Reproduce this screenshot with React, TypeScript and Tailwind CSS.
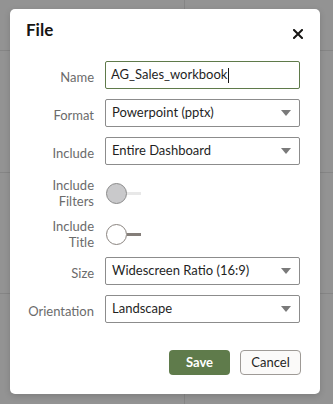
import React from "react";

const font = { fontFamily: "Lato, 'Open Sans', sans-serif" };

function Caret() {
  return (
    <svg width="10" height="6" viewBox="0 0 10 6" className="shrink-0">
      <path d="M0 0 H10 L5 6 Z" fill="#7a7a7a" />
    </svg>
  );
}

function Row({ label, children }: { label: React.ReactNode; children: React.ReactNode }) {
  return (
    <div className="flex items-start gap-[11px]">
      <div className="w-[68px] shrink-0 text-right text-[13px] leading-[28px] text-[#6b6b6b] translate-y-[2px]">{label}</div>
      {children}
    </div>
  );
}

function Select({ value }: { value: string }) {
  return (
    <div className="flex h-[28px] w-[195px] items-center justify-between rounded-[2px] border border-[#8c8c8c] pl-[6px] pr-[8px] text-[13px] text-[#1f1f1f]">
      <span>{value}</span>
      <Caret />
    </div>
  );
}

export default function App() {
  return (
    <div className="relative h-[404px] w-[333px] overflow-hidden bg-[#939393]" style={font}>
      <div className="grid h-full grid-cols-[185px_1fr] grid-rows-[51px_122px_121px_1fr]">
        <div className="border-b border-r border-[#858585]" />
        <div className="border-b border-[#858585]" />
        <div className="border-b border-r border-[#858585]" />
        <div className="border-b border-[#858585]" />
        <div className="border-b border-r border-[#858585]" />
        <div className="border-b border-[#858585]" />
        <div className="border-r border-[#858585]" />
        <div />
      </div>

      <div className="absolute left-[10px] top-[9px] flex h-[385px] w-[310px] flex-col rounded-[5px] bg-white px-[16px] shadow-[0_2px_6px_rgba(0,0,0,0.15)]">
        <div className="flex items-start justify-between pt-[10px]">
          <h1 className="text-[17px] font-bold leading-[22px] text-[#161513]">File</h1>
          <svg width="10" height="10" viewBox="0 0 10 10" className="mr-[1px] mt-[10px]">
            <path d="M1 1 L9 9 M9 1 L1 9" stroke="#161513" strokeWidth="2" strokeLinecap="square" />
          </svg>
        </div>

        <div className="mt-[20px] flex flex-col">
          <Row label="Name">
            <div className="flex h-[28px] w-[195px] items-center rounded-[2px] border border-[#5f7a4a] pl-[5px] text-[13px] text-[#1f1f1f]">
              <span>AG_Sales_workbook</span>
              <span className="ml-[1px] h-[15px] w-px bg-[#161513]" />
            </div>
          </Row>
          <div className="mt-[10px]">
            <Row label="Format">
              <Select value="Powerpoint (pptx)" />
            </Row>
          </div>
          <div className="mt-[10px]">
            <Row label="Include">
              <Select value="Entire Dashboard" />
            </Row>
          </div>

          <div className="mt-[12px] flex items-center gap-[12px]">
            <div className="w-[68px] shrink-0 text-right text-[13px] leading-[16px] text-[#6b6b6b]">
              Include<br />Filters
            </div>
            <div className="flex items-center">
              <div className="h-[21px] w-[21px] rounded-full border border-[#8a8a8a] bg-[#c9c9cb]" />
              <div className="h-[3px] w-[14px] bg-[#e8e8e8]" />
            </div>
          </div>

          <div className="mt-[9px] flex items-center gap-[12px]">
            <div className="w-[68px] shrink-0 text-right text-[13px] leading-[16px] text-[#6b6b6b]">
              Include<br />Title
            </div>
            <div className="flex items-center">
              <div className="h-[21px] w-[21px] rounded-full border border-[#8a847f] bg-white" />
              <div className="h-[3px] w-[14px] bg-[#847e79]" />
            </div>
          </div>

          <div className="mt-[7px]">
            <Row label="Size">
              <Select value="Widescreen Ratio (16:9)" />
            </Row>
          </div>
          <div className="mt-[10px]">
            <Row label="Orientation">
              <Select value="Landscape" />
            </Row>
          </div>

          <div className="mt-[27px] flex justify-end gap-[10px] pr-[3px]">
            <button className="h-[25px] w-[61px] rounded-[4px] bg-[#5f7b4b] text-[13px] font-bold text-white">Save</button>
            <button className="h-[25px] w-[61px] rounded-[4px] border border-[#9e9a96] bg-[#fbfaf9] text-[13px] text-[#1f1f1f]">Cancel</button>
          </div>
        </div>
      </div>
    </div>
  );
}
